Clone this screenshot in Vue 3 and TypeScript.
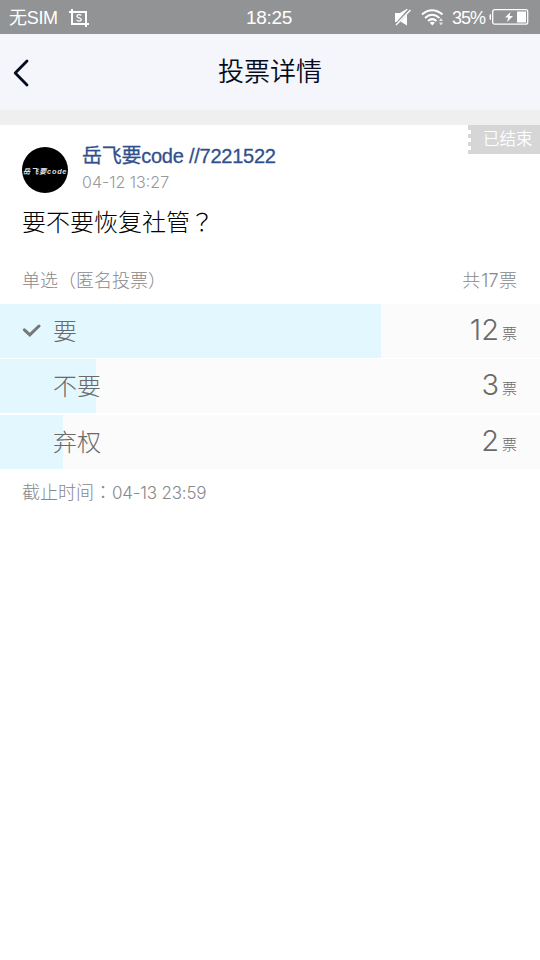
<script setup lang="ts">
interface Option {
  label: string
  votes: number
  fill: number
  selected: boolean
}

const options: Option[] = [
  { label: '要', votes: 12, fill: 381, selected: true },
  { label: '不要', votes: 3, fill: 96, selected: false },
  { label: '弃权', votes: 2, fill: 63, selected: false },
]

const total: number = options.reduce((sum, o) => sum + o.votes, 0)
</script>

<template>
  <div class="screen">
    <div class="status">
      <div class="status-left">
        <span class="carrier">无SIM</span>
        <svg class="shot" width="20" height="18" viewBox="0 0 20 18" fill="none" stroke="#fff">
          <path d="M0 3H17V18M3 0V15H20" stroke-width="2" />
          <path d="M12.2 6.6C11.7 5.4 8 5 7.9 7.2C7.9 9.3 12.3 8.2 12.3 10.5C12.2 12.7 8.2 12.4 7.7 10.9" stroke-width="1.3" />
        </svg>
      </div>
      <span class="clock">18:25</span>
      <div class="status-right">
        <svg class="mute" width="16" height="17" viewBox="0 0 16 17">
          <path d="M0 4H5L11.5 0H13L1.5 13H0ZM12 5.5V16.5L5.5 12.5Z" fill="#fff" />
          <path d="M15.5 1L1 16" stroke="#fff" stroke-width="1.4" />
        </svg>
        <svg class="wifi" width="23" height="17" viewBox="0 0 23 17" fill="none" stroke="#fff">
          <path d="M1 5.4Q11 -3 21.5 5.4" stroke-width="2" />
          <path d="M4 8.9Q11 2.7 18.5 8.9" stroke-width="2" />
          <path d="M7 12Q11.2 8.3 15.5 12" stroke-width="2" />
          <path d="M8.8 13.7Q11.3 12 13.8 13.7L11.3 16.5Z" fill="#fff" stroke="none" />
          <path d="M18 12L20 9L22 12ZM18 13.5H22L20 16.5Z" fill="#e5e5e5" stroke="none" />
        </svg>
        <span class="percent">35%</span>
        <svg class="battery" width="40" height="16" viewBox="0 0 40 16">
          <path d="M2 5.2H1.5Q.5 5.2 .5 6.5V9.5Q.5 10.8 1.5 10.8H2Z" fill="#fff" />
          <rect x="3.7" y=".7" width="35" height="14.5" rx="2" fill="none" stroke="#fff" stroke-width="1.3" />
          <rect x="28" y="2.5" width="9" height="11" fill="#fff" />
          <path d="M21.5 3L16 8.5H19.2L18 13L24 7H20.6Z" fill="#fff" />
        </svg>
      </div>
    </div>

    <header class="nav">
      <svg class="back" width="16" height="28" viewBox="0 0 16 28">
        <path d="M14 2L2.2 14L14 26" fill="none" stroke="#060b20" stroke-width="2.8" stroke-linecap="round" stroke-linejoin="round" />
      </svg>
      <h1>投票详情</h1>
    </header>
    <div class="divider"></div>

    <main>
      <div class="tag">
        <svg width="3" height="29" viewBox="0 0 3 29">
          <path d="M0 5H3V9H0ZM0 13H3V17H0ZM0 21H3V25H0Z" fill="#fff" />
        </svg>
        <span>已结束</span>
      </div>

      <section class="author">
        <div class="avatar"><span>岳飞要code</span></div>
        <div class="who">
          <div class="name">岳飞要code //7221522</div>
          <div class="time">04-12 13:27</div>
        </div>
      </section>

      <h2 class="question">要不要恢复社管<span class="mid">？</span></h2>

      <div class="meta">
        <span class="kind">单选<span class="mid">（</span>匿名投票<span class="mid">）</span></span>
        <span>共<span class="num total">{{ total }}</span>票</span>
      </div>

      <ul class="options">
        <li v-for="o in options" :key="o.label" class="option">
          <div class="fill" :style="{ width: o.fill + 'px' }"></div>
          <div class="mark">
            <svg v-if="o.selected" width="19" height="14" viewBox="0 0 19 14">
              <path d="M2.4 5.8L7.8 10.9L17 2" fill="none" stroke="#777" stroke-width="3" stroke-linecap="round" />
            </svg>
          </div>
          <span class="label">{{ o.label }}</span>
          <span class="count">{{ o.votes }}</span>
          <span class="unit">票</span>
        </li>
      </ul>

      <div class="deadline">截止时间<span class="mid">：</span><span class="num">04-13 23:59</span></div>
    </main>
  </div>
</template>

<style>
body {
  background: #fff;
}
</style>

<style scoped>
.screen {
  width: 540px;
  height: 960px;
  overflow: hidden;
  background: #fff;
  font-family: "Liberation Sans", "Noto Sans CJK SC", sans-serif;
  font-weight: 300;
  white-space: nowrap;
}
.mid {
  font-family: "Noto Sans CJK TC", sans-serif;
  line-height: 1;
}
.num {
  font-family: Inter, sans-serif;
  font-size: 17px;
  letter-spacing: -0.2px;
  line-height: 1;
}
.total {
  margin-left: 1px;
  font-size: 18px;
  letter-spacing: 0.3px;
}
.status {
  display: grid;
  grid-template-columns: 1fr auto 1fr;
  align-items: center;
  height: 34px;
  box-sizing: border-box;
  padding: 0 11px 0 9px;
  background: #929394;
  color: #fff;
  font-size: 18px;
  font-weight: 400;
  line-height: 34px;
}
.status-left,
.status-right {
  display: flex;
  align-items: center;
}
.carrier {
  letter-spacing: -0.3px;
}
.shot {
  margin-left: 11px;
}
.clock {
  padding-top: 1px;
  font-size: 19px;
  letter-spacing: -0.3px;
}
.status-right {
  justify-content: flex-end;
}
.mute {
  margin-right: 10px;
}
.wifi {
  margin-right: 8px;
}
.percent {
  letter-spacing: -1px;
  margin-right: 4px;
}
.battery {
  margin-bottom: 1px;
}
.nav {
  display: grid;
  grid-template-columns: 40px 1fr 40px;
  align-items: center;
  height: 76px;
  background: #f4f6fb;
}
.back {
  margin: 2px 0 0 13px;
}
h1 {
  margin: 0;
  padding-bottom: 1px;
  text-align: center;
  font-size: 26px;
  font-weight: 350;
  line-height: 38px;
  color: #060b20;
}
.divider {
  height: 15px;
  background: #efefef;
}
main {
  position: relative;
}
.tag {
  position: absolute;
  top: 0;
  right: 0;
  display: flex;
  width: 72px;
  height: 28.5px;
  background: #d6d6d6;
  color: #fff;
  font-size: 16.5px;
  font-weight: 350;
  line-height: 29px;
}
.tag span {
  margin-left: 12px;
}
.author {
  display: flex;
  padding: 22px 0 0 22px;
}
.avatar {
  display: flex;
  align-items: center;
  justify-content: center;
  width: 46px;
  height: 46px;
  border-radius: 50%;
  overflow: hidden;
  background: #000;
  color: #ddd;
  font-size: 7.4px;
  font-weight: 700;
  font-style: italic;
  letter-spacing: 0.7px;
}
.who {
  margin-left: 14px;
}
.name {
  height: 24px;
  margin-top: -2px;
  font-size: 20px;
  font-weight: 400;
  line-height: 22px;
  letter-spacing: -0.25px;
  color: #30508c;
  -webkit-text-stroke: 0.3px #30508c;
}
.time {
  margin-top: 2px;
  font-family: Inter, sans-serif;
  font-size: 16px;
  letter-spacing: 0;
  line-height: 22px;
  color: #999;
}
.question {
  height: 32px;
  margin: 14px 0 0 22px;
  font-size: 24px;
  font-weight: 300;
  line-height: 32px;
  color: #000;
}
.meta {
  display: flex;
  justify-content: space-between;
  height: 26px;
  margin-top: 29px;
  padding: 0 23px 0 22px;
  font-size: 18px;
  line-height: 26px;
  color: #888;
}
.options {
  margin: 9.5px 0 0;
  padding: 0;
  list-style: none;
  display: grid;
  gap: 1.5px;
}
.option {
  display: grid;
  grid-template-columns: 22px 31px 1fr auto auto;
  align-items: baseline;
  height: 54px;
  padding-right: 23px;
  background: #fbfbfb;
  color: #6a6a6a;
}
.fill {
  grid-area: 1 / 1 / 2 / 6;
  height: 54px;
  align-self: start;
  background: #e3f7ff;
}
.mark {
  grid-area: 1 / 2;
  align-self: start;
  padding-top: 20px;
}
.mark svg {
  display: block;
}
.label {
  grid-area: 1 / 3;
  font-size: 24px;
  line-height: 56px;
}
.count {
  grid-area: 1 / 4;
  font-family: Inter, sans-serif;
  font-size: 29px;
  line-height: 40px;
}
.unit {
  grid-area: 1 / 5;
  margin-left: 3px;
  font-size: 15px;
  line-height: 20px;
  transform: translateY(-1px);
}
.deadline {
  height: 26px;
  margin: 11.5px 0 0 22px;
  font-size: 18px;
  line-height: 26px;
  color: #888;
}
</style>
